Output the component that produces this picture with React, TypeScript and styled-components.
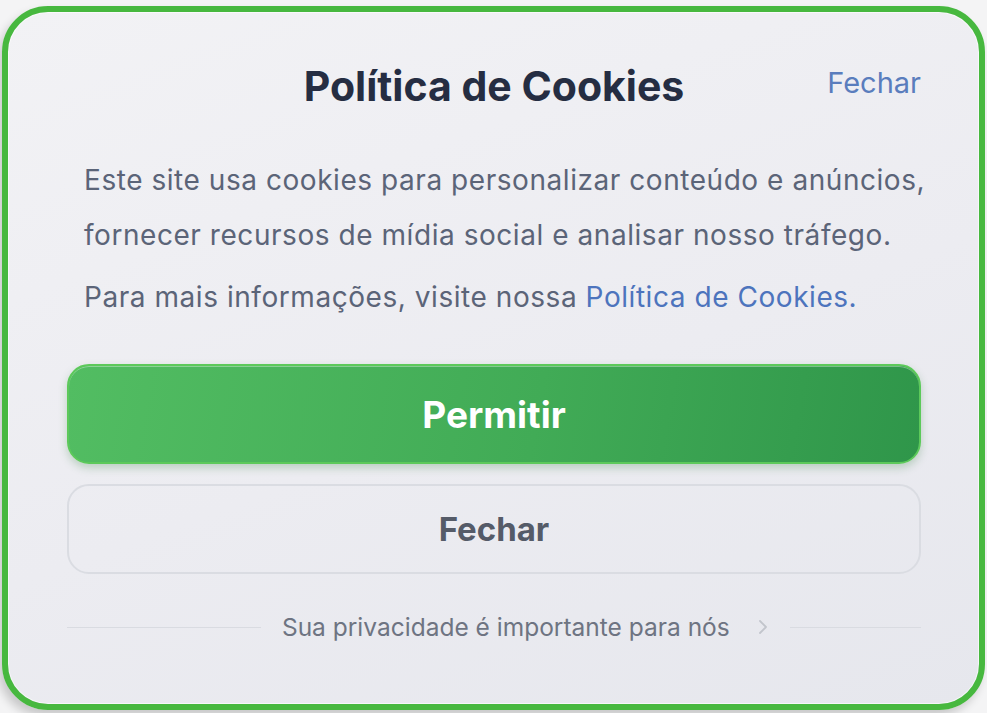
import styled, { createGlobalStyle } from "styled-components"

const GlobalStyle = createGlobalStyle`
  html, body {
    margin: 0;
    padding: 0;
    background: #f4f4f5;
    font-family: Inter, "Noto Sans", "Liberation Sans", sans-serif;
  }
`

export default function App() {
  return (
    <>
      <GlobalStyle />
      <Page>
        <Card>
          <Header>
            <span />
            <Title>Política de Cookies</Title>
            <CloseLink href="#">Fechar</CloseLink>
          </Header>
          <Text>
            Este site usa cookies para personalizar conteúdo e anúncios,
            <br />
            fornecer recursos de mídia social e analisar nosso tráfego.
          </Text>
          <Text $gap={7}>
            Para mais informações, visite nossa <InlineLink href="#">Política de Cookies.</InlineLink>
          </Text>
          <Actions>
            <PrimaryButton>Permitir</PrimaryButton>
            <SecondaryButton>Fechar</SecondaryButton>
          </Actions>
          <Footer>
            <Rule $grow={195} />
            <FooterText>Sua privacidade é importante para nós</FooterText>
            <Chevron viewBox="0 0 12 20">
              <path d="M3 4l6 6-6 6" fill="none" stroke="#c2c5cc" strokeWidth="1.8" strokeLinecap="round" strokeLinejoin="round" />
            </Chevron>
            <Rule $grow={132} />
          </Footer>
        </Card>
      </Page>
    </>
  )
}

const Page = styled.div`
  padding: 6px 2px 3px 2px;
`

const Card = styled.div`
  box-sizing: border-box;
  height: 704px;
  border: 6px solid #47b83f;
  border-radius: 46px;
  background: linear-gradient(160deg, #f2f2f5 0%, #ececf1 55%, #e6e7ed 100%);
  box-shadow: -4px 6px 10px rgba(0, 0, 0, 0.18), inset 0 0 0 1px rgba(255, 255, 255, 0.6);
  padding: 49px 58px 0 59px;
  display: flex;
  flex-direction: column;
`

const Header = styled.div`
  display: grid;
  grid-template-columns: 1fr auto 1fr;
  align-items: center;
  height: 46px;
`

const Title = styled.h1`
  margin: 0;
  font-size: 41px;
  font-weight: 700;
  color: #252d42;
  letter-spacing: 0;
`

const CloseLink = styled.a`
  justify-self: end;
  font-size: 29px;
  color: #5a7dbd;
  text-decoration: none;
  margin-top: -8px;
`

const Text = styled.p<{ $gap?: number }>`
  margin: ${p => p.$gap ?? 46}px 0 0;
  padding: 0 17px;
  font-size: 28px;
  line-height: 55px;
  letter-spacing: 0.55px;
  color: #5b6478;
  white-space: nowrap;
`

const InlineLink = styled.a`
  color: #4d74bd;
  text-decoration: none;
`

const Actions = styled.div`
  display: flex;
  flex-direction: column;
  gap: 20px;
  margin-top: 39px;
`

const PrimaryButton = styled.button`
  height: 100px;
  border-radius: 22px;
  border: 2px solid #5cc95a;
  background: linear-gradient(100deg, #52bd62 0%, #41ab56 55%, #2f964a 100%);
  box-shadow: inset 0 1px 0 rgba(255, 255, 255, 0.35), 0 4px 8px rgba(40, 120, 50, 0.25);
  color: #ffffff;
  font-family: inherit;
  font-size: 37px;
  font-weight: 700;
`

const SecondaryButton = styled.button`
  height: 90px;
  border-radius: 22px;
  border: 2px solid #dadce2;
  background: transparent;
  color: #555b68;
  font-family: inherit;
  font-size: 33px;
  font-weight: 700;
`

const Footer = styled.div`
  display: flex;
  align-items: center;
  gap: 21px;
  margin-top: 38px;
`

const Rule = styled.div<{ $grow: number }>`
  flex: ${p => p.$grow} 1 0;
  height: 1px;
  background: #d9dbe1;
`

const FooterText = styled.span`
  font-size: 24.5px;
  color: #6e7482;
`

const Chevron = styled.svg`
  width: 12px;
  height: 20px;
  margin-left: 6px;
`
